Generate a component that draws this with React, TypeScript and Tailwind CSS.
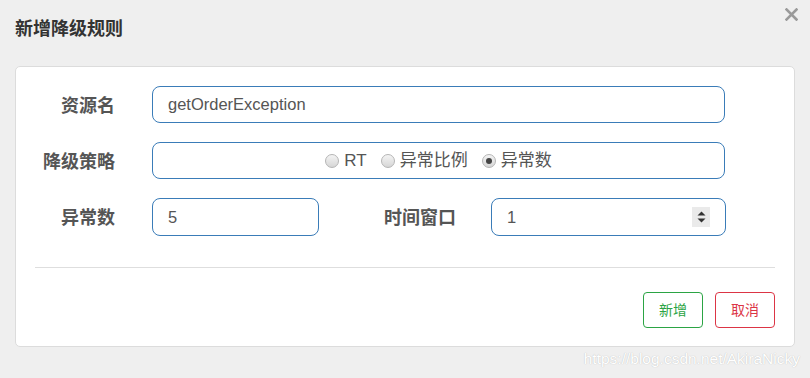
import React from 'react';

const cjk = { fontFamily: '"Liberation Sans", "Noto Sans CJK SC", sans-serif' };

const Radio: React.FC<{ label: string; checked?: boolean }> = ({ label, checked }) => (
  <label className="flex items-center gap-[5px] text-[17px] text-[#555]">
    <span className="w-[14px] h-[14px] rounded-full border border-[#b5b5b5] bg-gradient-to-b from-[#f4f4f4] to-[#d6d6d6] flex items-center justify-center">
      {checked && <span className="w-[6px] h-[6px] rounded-full bg-[#444]"></span>}
    </span>
    <span>{label}</span>
  </label>
);

const App: React.FC = () => {
  return (
    <div className="relative w-[810px] h-[378px] bg-[#efefef] overflow-hidden" style={cjk}>
      {/* Header */}
      <div className="flex items-start justify-between pl-[15px] pr-[12px] pt-[16px] h-[66px]">
        <h4 className="text-[18px] font-bold text-[#333] leading-[26px]">新增降级规则</h4>
        <button className="-mt-[8px] text-[#999]">
          <svg width="13" height="13" viewBox="0 0 13 13">
            <path d="M1.5 1.5 L11.5 11.5 M11.5 1.5 L1.5 11.5" stroke="#9a9a9a" strokeWidth="2.6" strokeLinecap="square" />
          </svg>
        </button>
      </div>

      {/* Card */}
      <div className="mx-[15px] w-[780px] h-[281px] bg-white border border-[#dcdcdc] rounded-[5px] pt-[19px] flex flex-col">
        <div className="flex flex-col gap-[19px]">
          <div className="flex items-center">
            <div className="w-[99px] pt-[3px] text-right text-[18px] font-bold text-[#555]">资源名</div>
            <input
              readOnly
              value="getOrderException"
              className="ml-[37px] w-[573px] h-[37px] border border-[#3a7cb8] rounded-[8px] px-[15px] text-[16.5px] text-[#555] outline-none"
            />
          </div>

          <div className="flex items-center">
            <div className="w-[99px] pt-[3px] text-right text-[18px] font-bold text-[#555]">降级策略</div>
            <div className="ml-[37px] w-[573px] h-[37px] border border-[#3a7cb8] rounded-[8px] flex items-center justify-center gap-[14px]">
              <Radio label="RT" />
              <Radio label="异常比例" />
              <Radio label="异常数" checked />
            </div>
          </div>

          <div className="flex items-center">
            <div className="w-[99px] pt-[3px] text-right text-[18px] font-bold text-[#555]">异常数</div>
            <input
              readOnly
              value="5"
              className="ml-[37px] w-[167px] h-[38px] border border-[#3a7cb8] rounded-[8px] px-[15px] text-[16.5px] text-[#555] outline-none"
            />
            <div className="w-[137px] pt-[3px] text-right text-[18px] font-bold text-[#555]">时间窗口</div>
            <div className="ml-[35px] w-[235px] h-[38px] border border-[#3a7cb8] rounded-[8px] pl-[15px] pr-[15px] flex items-center justify-between">
              <span className="text-[16.5px] text-[#555]">1</span>
              <span className="w-[18px] h-[20px] bg-[#eaeaea] flex items-center justify-center">
                <svg width="9" height="12" viewBox="0 0 9 12">
                  <path d="M4.5 0.5 L8.5 4.5 L0.5 4.5 Z M0.5 7.5 L8.5 7.5 L4.5 11.5 Z" fill="#333" />
                </svg>
              </span>
            </div>
          </div>
        </div>

        <div className="mx-[19px] mt-[31px] border-t border-[#dedede]"></div>

        <div className="flex justify-end gap-[12px] pr-[19px] mt-[24px]">
          <button className="w-[60px] h-[36px] rounded-[4px] border border-[#2ba444] text-[#2ba444] text-[14px]">新增</button>
          <button className="w-[60px] h-[36px] rounded-[4px] border border-[#dc3545] text-[#dc3545] text-[14px]">取消</button>
        </div>
      </div>

      {/* Watermark */}
      <div
        className="absolute right-[10px] bottom-[8px] text-[15.5px] text-white [text-shadow:0_0_1px_#b0b0b0]"
        style={{ fontFamily: '"Liberation Sans", sans-serif' }}
      >
        https://blog.csdn.net/AkiraNicky
      </div>
    </div>
  );
};

export default App;
